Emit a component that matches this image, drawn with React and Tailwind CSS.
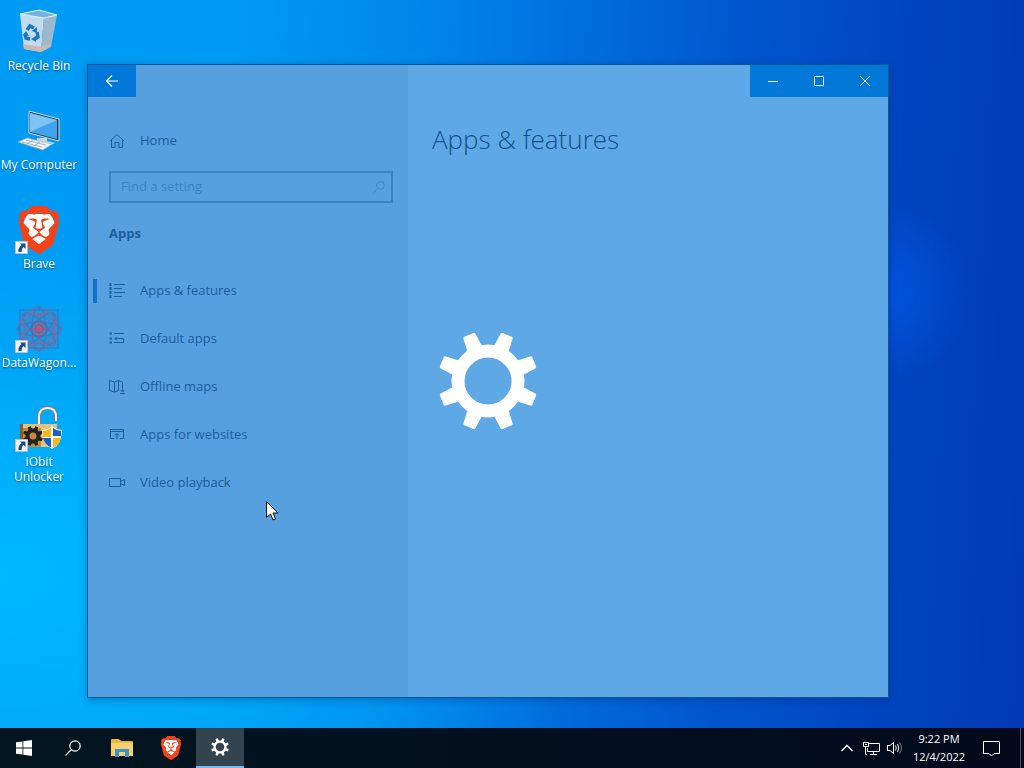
import { useState } from 'react';
import { SiBrave } from 'react-icons/si';

const navItems = [
  { id: 'features', label: 'Apps & features', icon: ListIcon },
  { id: 'default', label: 'Default apps', icon: DefaultAppsIcon },
  { id: 'maps', label: 'Offline maps', icon: MapIcon },
  { id: 'websites', label: 'Apps for websites', icon: WebsiteIcon },
  { id: 'video', label: 'Video playback', icon: VideoIcon },
];

const shortcuts = [
  { label: 'Recycle Bin', icon: RecycleBin },
  { label: 'My Computer', icon: Computer },
  { label: 'Brave', icon: BraveLarge, linked: true },
  { label: 'DataWagon...', icon: DataWagon, linked: true },
  { label: 'IObit Unlocker', icon: Unlocker, linked: true },
];

const teeth = [22.5, 67.5, 112.5, 157.5, 202.5, 247.5, 292.5, 337.5];
const orbits = [0, 45, 90, 135];

// サイドバーのアイコン
function HomeIcon() {
  return (
    <svg width="16" height="16" viewBox="0 0 16 16" fill="none" stroke="currentColor">
      <path d="M1 8 8 1.5 15 8M2.500 7V14.5H6V9.5H10V14.5H13.500V7" />
    </svg>
  );
}

function ListIcon() {
  return (
    <svg width="16" height="16" viewBox="0 0 16 16" fill="none" stroke="currentColor">
      <path d="M5 1.5H16M5 5.5H13M5 9.5H16M5 13.5H13" />
      <path d="M1.5 0V15" strokeWidth="2" strokeDasharray="3 1" />
    </svg>
  );
}

function DefaultAppsIcon() {
  return (
    <svg width="16" height="16" viewBox="0 0 16 16" fill="none" stroke="currentColor">
      <path d="M5 2.5H15M6 7.5H14.5V11.5H5M8 5.5 6 7.5 8 9.5" />
      <path d="M.5 2.5H3M.5 7.5H3M.5 11.5H3" strokeWidth="2" />
    </svg>
  );
}

function MapIcon() {
  return (
    <svg width="16" height="16" viewBox="0 0 16 16" fill="none" stroke="currentColor">
      <path d="M9.5 11.5 5.5 13 .5 11.5V1.5L5.5 3 9.5 1.5 13.5 3V7M5.5 3V13M9.5 1.5V11.5M13.5 7V13M11.5 11 13.5 13 15.5 11M11 14.5H16" />
    </svg>
  );
}

function WebsiteIcon() {
  return (
    <svg width="16" height="16" viewBox="0 0 16 16" fill="none" stroke="currentColor">
      <path d="M5 11.5H1.5V2.5H14.5V11.5H11M1.5 4.5H14.5M8 12V6.5M6 8.500 8 6.5 10 8.500" />
    </svg>
  );
}

function VideoIcon() {
  return (
    <svg width="16" height="16" viewBox="0 0 16 16" fill="none" stroke="currentColor">
      <path d="M.5 3.5H11.5V11.5H.5ZM11.5 6.5 15.5 4.5V10.5L11.5 8.5" />
    </svg>
  );
}

function SearchIcon({ size }) {
  return (
    <svg width={size} height={size} viewBox="0 0 16 16" fill="none" stroke="currentColor" strokeWidth="1.2">
      <circle cx="10" cy="6" r="5.200" />
      <path d="M6.5 9.5.5 15.5" />
    </svg>
  );
}

function Gear({ size, ring }) {
  return (
    <svg width={size} height={size} viewBox="-50 -50 100 100" fill="currentColor">
      {teeth.map((angle) => (
        <path key={angle} transform={`rotate(${angle})`} d="M-8-32-6.5-48.5Q-6.3-50-5-50H5Q6.3-50 6.5-48.5L8-32Z" />
      ))}
      <circle r={23.5 + ring / 2} fill="none" stroke="currentColor" strokeWidth={ring} />
    </svg>
  );
}

// デスクトップのアイコン
function RecycleBin() {
  return (
    <svg width="48" height="48" viewBox="6 0 48 48">
      <path d="M11 6 35 9 32 44 15 41Z" fill="#c3dbec" />
      <path d="M35 9 48 7 42 39 32 44Z" fill="#9db9cf" />
      <path d="M11 6 30 2 48 7 35 10Z" fill="#6fb4df" stroke="#e3f1fa" />
      <path d="M14 36 32 39 42 35 41 39 32 44 15 41Z" fill="#cbb9ad" />
      <g fill="none" stroke="#1977c9" strokeWidth="3.500">
        <path d="M18 22 21 18 25 20M28 24 29 29 26 31M21 31 17 30 16 26" />
      </g>
      <path d="m23 23 5-4v6ZM27 28v6l-5-3ZM14 27l3-4 3 5Z" fill="#1977c9" />
    </svg>
  );
}

function Computer() {
  return (
    <svg width="48" height="48" viewBox="6 0 48 48">
      <path d="M28 31H38V34L46 36 38 40 28 37Z" fill="#c8d5de" />
      <path d="M20 4 50 12V34L20 26Z" fill="#223b51" stroke="#d1dce4" />
      <path d="M21 6 48 13V32L21 25Z" fill="#3da4ed" />
      <path d="M21 6 48 13 21 25Z" fill="#7bc4f5" />
      <path d="M9 35 18 31 43 37 34 43Z" fill="#eff3f5" stroke="#a3aeb5" strokeWidth=".7" />
      <path d="M13 35 33 40M17 33 37 38M18 37 24 33M25 39 31 35" stroke="#8a9caa" strokeWidth=".7" />
    </svg>
  );
}

function BraveLogo({ size }) {
  return (
    <svg width={size} height={size} viewBox="0 0 24 24">
      <path d="M6 4H18L20 9 17 17 12 21 7 17 4 9Z" fill="#fff" />
      <SiBrave size={24} color="#f4431b" />
    </svg>
  );
}

function BraveLarge() {
  return <BraveLogo size={48} />;
}

function DataWagon() {
  return (
    <svg width="48" height="48" viewBox="0 0 48 48" fill="none">
      {orbits.map((angle) => (
        <g key={angle} transform={`rotate(${angle} 24 24)`} strokeWidth="1">
          <ellipse cx="24" cy="24" rx="22" ry="7" stroke="#4f6fae" />
          <path d="M2 20 12 14 24 24 36 14 46 20M2 28 12 34 24 24 36 34 46 28" stroke="#ad5a80" />
          <circle cx="44" cy="24" r="1.500" fill="#b2597d" />
          <circle cx="4" cy="24" r="1.500" fill="#4f6fae" />
        </g>
      ))}
      <rect x="5" y="5" width="38" height="38" stroke="#4f6fae" />
      <rect x="10" y="10" width="28" height="28" stroke="#8a6596" />
      <circle cx="24" cy="24" r="8" stroke="#4f6fae" strokeWidth="2" />
      <circle cx="24" cy="24" r="4" stroke="#ba4a6d" strokeWidth="2" />
    </svg>
  );
}

function Unlocker() {
  return (
    <svg width="48" height="48" viewBox="0 0 48 48">
      <path d="M24 21V13Q24 4 32.500 4T41 13V17" fill="none" stroke="#77838c" strokeWidth="4" />
      <path d="M24 21V13Q24 4 32.500 4T41 13V17" fill="none" stroke="#f2f4f5" strokeWidth="2" />
      <rect x="5" y="20" width="37" height="23" fill="#c58a3c" />
      <path d="M5 20H42V24H5ZM26 24H33V43H26Z" fill="#e9c078" />
      <path d="M5 20H8V43H5Z" fill="#8a5c26" />
      <g transform="translate(18 32)" fill="#242220">
        {teeth.map((angle) => (
          <path key={angle} transform={`rotate(${angle})`} d="M-2-6-1.500-10H1.500L2-6Z" />
        ))}
        <circle r="5.500" fill="none" stroke="#242220" strokeWidth="4" />
      </g>
      <path d="M37 22Q42 26 47 26 47 40 37 45 27 40 27 26 32 26 37 22Z" fill="#fff" />
      <path d="M36 24V33H28Q28 29 28 27 32 27 36 24ZM38 34H46Q44 41 38 43.500Z" fill="#fdb813" />
      <path d="M38 24Q42 27 46 27V32H38ZM28 34H36V43.500Q30 41 28 34Z" fill="#1c61bd" />
    </svg>
  );
}

function ShortcutArrow() {
  return (
    <svg className="absolute bottom-0 left-0" width="13" height="13" viewBox="0 0 13 13">
      <path d="M.5.5H12.500V12.500H.5Z" fill="#f5f8fb" stroke="#b5c4d2" />
      <path d="M5 2.500H10.500V8L8.500 6Q6 8 6.500 11H3.500Q3 7 6.500 4Z" fill="#184a91" />
    </svg>
  );
}

function Desktop() {
  return (
    <div className="flex w-[78px] flex-col pt-2">
      {shortcuts.map(({ label, icon: Icon, linked }) => (
        <button key={label} className="flex h-[99px] flex-col items-center text-center text-[12px] leading-[15px] text-white">
          <span className="relative mb-[2px] block">
            <Icon />
            {linked && <ShortcutArrow />}
          </span>
          <span className="[text-shadow:0_1px_2px_rgba(0,0,0,0.5)]">{label}</span>
        </button>
      ))}
    </div>
  );
}

function SettingsWindow() {
  const [active, setActive] = useState('features');

  return (
    <section className="absolute top-[64px] right-[135px] bottom-[30px] left-[87px] flex border border-[#0b5592] bg-[#5ea8e6] text-[#1b5f9b] shadow-[0_2px_8px_rgba(0,30,100,0.3)]">
      <aside className="flex w-80 flex-col bg-[#57a0df]">
        <button aria-label="Back" className="flex h-8 w-12 items-center justify-center bg-[#0078d7] text-white">
          <svg width="14" height="14" viewBox="0 0 14 14" fill="none" stroke="currentColor" strokeWidth="1.200">
            <path d="M13 7H1.500M7 1.500 1.500 7 7 12.500" />
          </svg>
        </button>

        <a href="#home" className="mt-6 flex h-10 items-center gap-[15px] pl-[21px] text-[13px]">
          <HomeIcon />
          Home
        </a>

        <label className="mt-[10px] mr-[15px] ml-[21px] flex h-8 items-center border-2 border-[#3684c5] pr-[6px] pl-[10px] text-[#3b84c1]">
          <input aria-label="Find a setting" placeholder="Find a setting" className="min-w-0 flex-1 bg-transparent text-[13px] outline-none placeholder:text-[#3b84c1]" />
          <SearchIcon size={12} />
        </label>

        <h2 className="mt-5 pl-[21px] text-[13px] leading-5 font-bold">Apps</h2>

        <nav className="mt-6">
          {navItems.map(({ id, label, icon: Icon }) => (
            <a
              key={id}
              href={`#${id}`}
              onClick={() => setActive(id)}
              className="flex h-12 items-center pl-[5px] text-[13px]"
            >
              <span className={`mr-3 h-6 w-1 ${active === id ? 'bg-[#0f73c8]' : 'bg-transparent'}`} />
              <Icon />
              <span className="ml-[15px]">{label}</span>
            </a>
          ))}
        </nav>
      </aside>

      <main className="flex flex-1 flex-col">
        <div className="flex h-8 self-end bg-[#0078d7] text-white">
          <button aria-label="Minimize" className="flex w-[46px] items-center justify-center">
            <svg width="10" height="10" viewBox="0 0 10 10" stroke="currentColor"><path d="M0 5.500H10" /></svg>
          </button>
          <button aria-label="Maximize" className="flex w-[46px] items-center justify-center">
            <svg width="10" height="10" viewBox="0 0 10 10" fill="none" stroke="currentColor"><path d="M.5.5H9.500V9.500H.5Z" /></svg>
          </button>
          <button aria-label="Close" className="flex w-[46px] items-center justify-center">
            <svg width="10" height="10" viewBox="0 0 10 10" stroke="currentColor"><path d="M0 0 10 10M10 0 0 10" /></svg>
          </button>
        </div>
        <h1 className="mt-6 pl-6 text-[26px] leading-9 font-light text-[#12528c]">Apps &amp; features</h1>
      </main>

      {/* 起動中のスプラッシュ */}
      <div className="pointer-events-none absolute inset-0 flex items-center justify-center text-white">
        <Gear size={100} ring={13} />
      </div>
    </section>
  );
}

function Taskbar() {
  return (
    <footer className="flex h-10 items-stretch bg-linear-to-r from-[#02151f] to-[#020a1c] text-white">
      <div className="flex gap-px">
        <button aria-label="Start" className="flex w-12 items-center justify-center">
          <svg width="16" height="16" viewBox="0 0 16 16" fill="currentColor">
            <path d="M0 2.300 6.500 1.400V7.600H0ZM7.300 1.300 16 0V7.600H7.300ZM0 8.400H6.500V14.600L0 13.700ZM7.300 8.400H16V16L7.300 14.700Z" />
          </svg>
        </button>
        <button aria-label="Search" className="flex w-12 items-center justify-center">
          <SearchIcon size={16} />
        </button>
        <button aria-label="File Explorer" className="flex w-12 items-center justify-center">
          <svg width="22" height="18" viewBox="0 0 22 18">
            <path d="M0 1Q0 0 1 0H8L10 2H21Q22 2 22 3V17H0Z" fill="#e8b64a" />
            <path d="M0 4H22V17H0Z" fill="#f7d06a" />
            <path d="M4 10H18V18H14V13H8V18H4Z" fill="#3b94cf" />
          </svg>
        </button>
        <button aria-label="Brave" className="flex w-12 items-center justify-center">
          <BraveLogo size={24} />
        </button>
        <button aria-label="Settings" className="flex w-12 items-center justify-center border-b-2 border-[#76b9ed] bg-[#33444e]">
          <Gear size={18} ring={13} />
        </button>
      </div>

      <div className="ml-auto flex items-center">
        <button aria-label="Show hidden icons" className="flex w-6 justify-center">
          <svg width="12" height="8" viewBox="0 0 12 8" fill="none" stroke="currentColor" strokeWidth="1.300"><path d="M.5 7 6 1.500 11.500 7" /></svg>
        </button>
        <button aria-label="Network" className="flex w-6 justify-center">
          <svg width="17" height="15" viewBox="0 0 17 15" fill="none" stroke="currentColor">
            <path d="M6 2.500H16.500V10.500H4.500V7M10.500 10.500V13.500M7 13.500H14M.5 1.500H5.500V5.500H.5ZM2.500 5.500V13.500H4M2 3.500H4" />
          </svg>
        </button>
        <button aria-label="Volume" className="flex w-6 justify-center">
          <svg width="16" height="14" viewBox="0 0 16 14" fill="none" stroke="currentColor">
            <path d="M.5 4.500H3L6.500 1.500V12.500L3 9.500H.5ZM8.500 4.500Q10 7 8.500 9.500M10.500 3Q13 7 10.500 11" />
            <path d="M12.500 1.500Q16.500 7 12.500 12.500" opacity=".5" />
          </svg>
        </button>
        <button className="w-16 text-center text-[11px] leading-[18px]">
          <span className="block">9:22 PM</span>
          <span className="block">12/4/2022</span>
        </button>
        <button aria-label="Notifications" className="mr-[9px] flex w-10 justify-center">
          <svg width="17" height="17" viewBox="0 0 17 17" fill="none" stroke="currentColor">
            <path d="M.5 1.500H16.500V13.500H11L8.500 16 6 13.500H.5Z" />
          </svg>
        </button>
        <button aria-label="Show desktop" className="h-10 w-1 border-l border-[#4c5866]" />
      </div>
    </footer>
  );
}

export default function App() {
  return (
    <div className="flex h-screen flex-col overflow-hidden bg-[radial-gradient(circle_at_86%_38%,#0054de_0%,transparent_9%),radial-gradient(ellipse_at_0%_75%,#00b8ff_0%,transparent_42%),linear-gradient(93deg,#009cf4_0%,#009af3_22%,#0086ea_40%,#006cdc_56%,#0056ce_70%,#0046c0_85%,#003ab4_100%)] font-['Open_Sans','Noto_Sans',sans-serif]">
      <div className="relative flex-1">
        <Desktop />
        <SettingsWindow />
        <svg className="pointer-events-none absolute top-[501px] left-[266px]" width="13" height="20" viewBox="0 0 13 20">
          <path d="M.5.5V16.500L4.500 13 7 19 9.500 18 7 12H12Z" fill="#fff" stroke="#111" />
        </svg>
      </div>
      <Taskbar />
    </div>
  );
}
